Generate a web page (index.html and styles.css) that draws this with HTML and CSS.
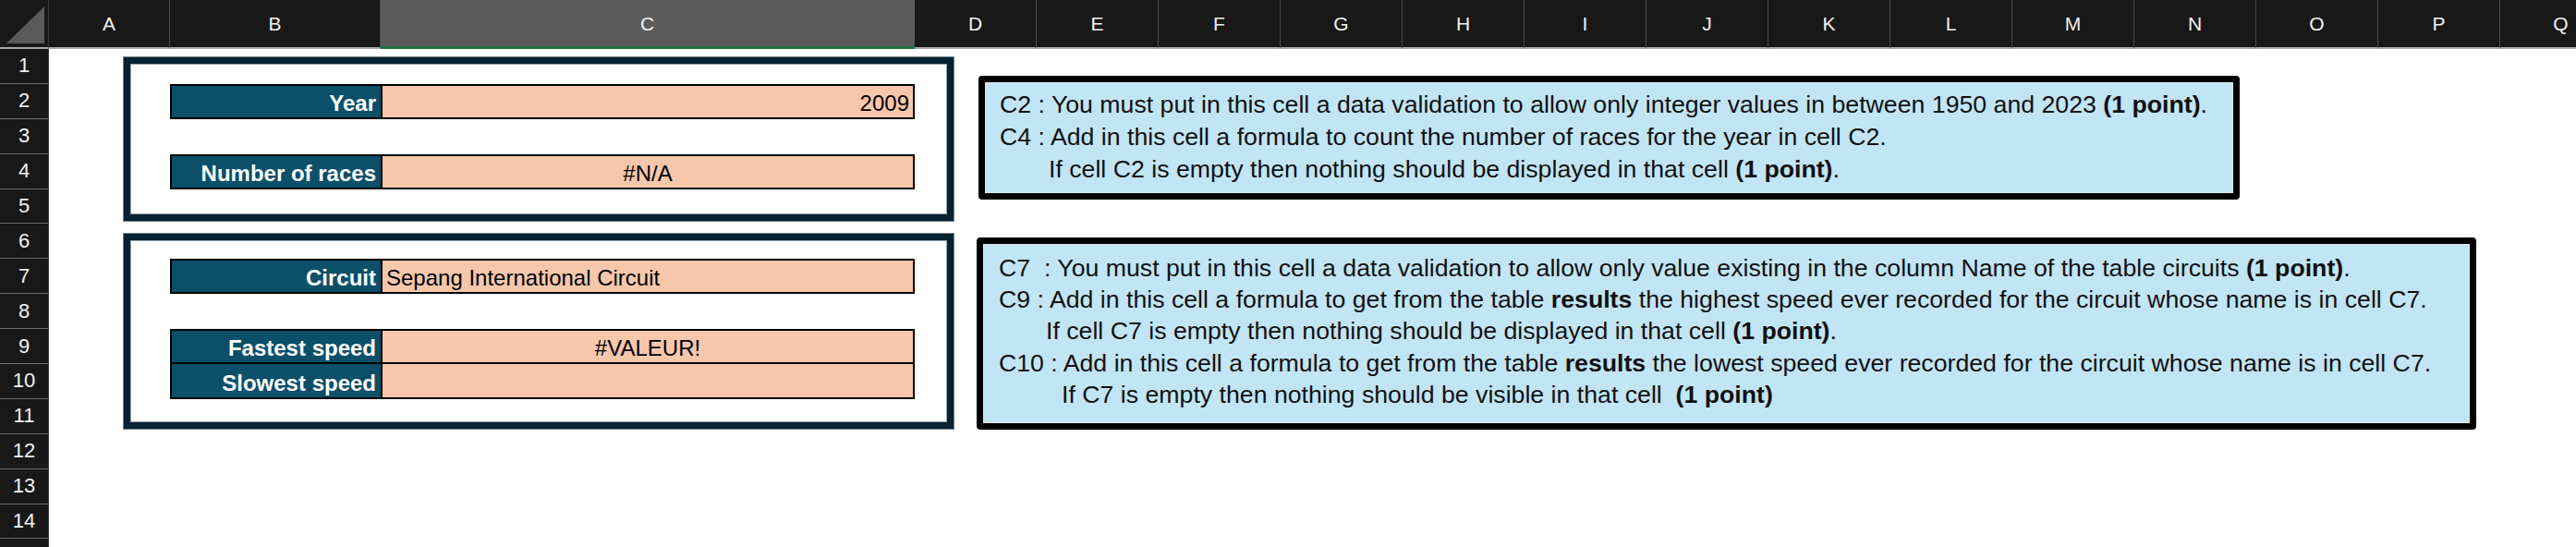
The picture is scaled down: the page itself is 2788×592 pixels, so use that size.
FILE: index.html
```html
<!DOCTYPE html>
<html lang="en">
<head>
<meta charset="utf-8">
<title>Sheet</title>
<link rel="stylesheet" href="styles.css">
</head>
<body>
<div class="app">
  <div class="colhead">
    <div class="corner"><svg class="corner-tri" width="42" height="41" viewBox="0 0 42 41"><polygon points="41,0 41,40 0,40" fill="#5a5a5a"/></svg></div>
    <div class="ch">A</div>
    <div class="ch">B</div>
    <div class="ch sel">C</div>
    <div class="ch">D</div>
    <div class="ch">E</div>
    <div class="ch">F</div>
    <div class="ch">G</div>
    <div class="ch">H</div>
    <div class="ch">I</div>
    <div class="ch">J</div>
    <div class="ch">K</div>
    <div class="ch">L</div>
    <div class="ch">M</div>
    <div class="ch">N</div>
    <div class="ch">O</div>
    <div class="ch">P</div>
    <div class="ch">Q</div>
  </div>
  <div class="body">
    <div class="rowhead">
      <div class="rh">1</div><div class="rh">2</div><div class="rh">3</div><div class="rh">4</div><div class="rh">5</div>
      <div class="rh">6</div><div class="rh">7</div><div class="rh">8</div><div class="rh">9</div><div class="rh">10</div>
      <div class="rh">11</div><div class="rh">12</div><div class="rh">13</div><div class="rh">14</div><div class="rh"></div>
    </div>
    <div class="grid">
      <div class="cell label r2">Year</div>
      <div class="cell value r2 right">2009</div>

      <div class="cell label r4">Number of races</div>
      <div class="cell value r4 center">#N/A</div>

      <div class="cell label r7">Circuit</div>
      <div class="cell value r7 left">Sepang International Circuit</div>

      <div class="cell label r9">Fastest speed</div>
      <div class="cell value r9 center">#VALEUR!</div>

      <div class="cell label r10 notop">Slowest speed</div>
      <div class="cell value r10 notop center"></div>

      <div class="frame frame1"></div>
      <div class="frame frame2"></div>

      <div class="note note1">
        <div class="line">C2 : You must put in this cell a data validation to allow only integer values in between 1950 and 2023 <b>(1 point)</b>.</div>
        <div class="line">C4 : Add in this cell a formula to count the number of races for the year in cell C2.</div>
        <div class="line ind-a">If cell C2 is empty then nothing should be displayed in that cell <b>(1 point)</b>.</div>
      </div>

      <div class="note note2">
        <div class="line">C7  : You must put in this cell a data validation to allow only value existing in the column Name of the table circuits <b>(1 point)</b>.</div>
        <div class="line">C9 : Add in this cell a formula to get from the table <b>results</b> the highest speed ever recorded for the circuit whose name is in cell C7.</div>
        <div class="line ind-b">If cell C7 is empty then nothing should be displayed in that cell <b>(1 point)</b>.</div>
        <div class="line">C10 : Add in this cell a formula to get from the table <b>results</b> the lowest speed ever recorded for the circuit whose name is in cell C7.</div>
        <div class="line ind-c">If C7 is empty then nothing should be visible in that cell  <b>(1 point)</b></div>
      </div>
    </div>
  </div>
</div>
</body>
</html>
```

FILE: styles.css
```css
* { box-sizing: border-box; }

html, body {
  margin: 0;
  padding: 0;
  background: #ffffff;
  overflow: hidden;
}

body {
  width: 2788px;
  height: 592px;
  font-family: "Liberation Sans", Arial, sans-serif;
}

.app {
  width: 2788px;
  height: 592px;
  overflow: hidden;
}

/* column header */
.colhead {
  display: grid;
  grid-template-columns: 53px 131px 228px 578px repeat(14, 132px);
  height: 53px;
  background: #181818;
}

.corner {
  position: relative;
  border-bottom: 2px solid #a9a9a9;
  border-right: 1px solid #3c3c3c;
  background: #181818;
}

.corner-tri {
  position: absolute;
  left: 7px;
  top: 7px;
}

.ch {
  display: flex;
  align-items: center;
  justify-content: center;
  color: #f2f2f2;
  font-size: 21px;
  border-right: 1px solid #4a4a4a;
  border-bottom: 2px solid #a9a9a9;
  padding-top: 1px;
}

.ch.sel {
  background: #5b5b5b;
  border-bottom: 3px solid #1f7244;
  border-right-color: #5b5b5b;
}

/* body */
.body {
  display: flex;
}

.rowhead {
  width: 53px;
  flex: none;
  background: #181818;
  display: flex;
  flex-direction: column;
  border-right: 1px solid #3c3c3c;
}

.rh {
  height: 37.9px;
  display: flex;
  align-items: center;
  justify-content: center;
  color: #f2f2f2;
  font-size: 22px;
  border-bottom: 1px solid #6a6a6a;
}

.grid {
  position: relative;
  flex: none;
  display: grid;
  grid-template-columns: 131px 228px 578px repeat(14, 132px);
  grid-template-rows: repeat(15, 37.9px);
}

/* cells */
.cell {
  display: flex;
  align-items: flex-end;
  font-size: 24px;
  white-space: nowrap;
  overflow: hidden;
  border-top: 2px solid #000;
  border-bottom: 2px solid #000;
  padding-bottom: 1px;
}

.cell.notop { border-top: 0; }

.label {
  grid-column: 2;
  background: #0b4f69;
  color: #ffffff;
  font-weight: bold;
  justify-content: flex-end;
  border-left: 2px solid #000;
  padding-right: 5px;
}

.value {
  grid-column: 3;
  background: #f7c7ac;
  color: #000;
  border-left: 2px solid #000;
  border-right: 2px solid #000;
}

.value.right { justify-content: flex-end; padding-right: 4px; }
.value.center { justify-content: center; }
.value.left { justify-content: flex-start; padding-left: 4px; }

.r2 { grid-row: 2; }
.r4 { grid-row: 4; }
.r7 { grid-row: 7; }
.r9 { grid-row: 9; }
.r10 { grid-row: 10; }

/* frame shapes over the sheet */
.frame {
  position: absolute;
  left: 81px;
  width: 898px;
  border: 7px solid #072331;
  box-shadow: 0 0 0 1px #71838e, inset 0 0 0 1px #95a3ab;
  background: transparent;
}

.frame1 { top: 9px; height: 177px; }
.frame2 { top: 200px; height: 211px; }

/* text boxes */
.note {
  position: absolute;
  background: #c1e5f5;
  border: 7px solid #000;
  border-radius: 4px;
  box-shadow: inset 0 0 0 1px #dbe8ee;
  font-size: 26.7px;
  color: #111;
}

.note .line { white-space: pre; }

.note1 {
  left: 1006px;
  top: 29px;
  width: 1365px;
  height: 134px;
  padding: 7px 0 0 16px;
  line-height: 35px;
}

.note2 {
  left: 1004px;
  top: 204px;
  width: 1623px;
  height: 208px;
  padding: 8.6px 0 0 17px;
  line-height: 34.4px;
}

.note b { font-weight: bold; }

.ind-a { padding-left: 53px; }
.ind-b { padding-left: 51px; }
.ind-c { padding-left: 68px; }
```
